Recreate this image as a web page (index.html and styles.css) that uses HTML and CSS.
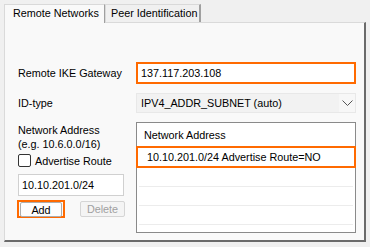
FILE: index.html
```html
<!DOCTYPE html>
<html lang="en">
<head>
    <meta charset="UTF-8">
    <title>Remote Networks</title>
    <link rel="stylesheet" href="styles.css">
</head>
<body>
    <div class="tabs">
        <div class="tab active">Remote Networks</div>
        <div class="tab">Peer Identification</div>
    </div>

    <div class="panel">
        <div class="row gateway-row">
            <label class="label">Remote IKE Gateway</label>
            <div class="mark gateway-mark">
                <div class="textbox gateway">137.117.203.108</div>
            </div>
        </div>

        <div class="row id-row">
            <label class="label">ID-type</label>
            <div class="combo">
                <span>IPV4_ADDR_SUBNET (auto)</span>
                <span class="chevron">
                    <svg width="11" height="7" viewBox="0 0 11 7"><path d="M0.5 0.5 L5.5 5.5 L10.5 0.5" fill="none" stroke="#555" stroke-width="1"/></svg>
                </span>
            </div>
        </div>

        <div class="row networks-row">
            <div class="left-col">
                <div class="net-label">Network Address<br>(e.g. 10.6.0.0/16)</div>
                <label class="check"><span class="box"></span>Advertise Route</label>
                <div class="textbox net-input">10.10.201.0/24</div>
                <div class="buttons">
                    <div class="mark add-mark"><div class="btn">Add</div></div>
                    <div class="btn disabled">Delete</div>
                </div>
            </div>

            <div class="listbox">
                <div class="list-head">Network Address</div>
                <div class="mark list-mark">
                    <div class="list-item">10.10.201.0/24 Advertise Route=NO</div>
                </div>
                <div class="list-item empty"></div>
                <div class="list-item empty"></div>
                <div class="list-item empty"></div>
            </div>
        </div>
    </div>
</body>
</html>
```

FILE: styles.css
```css
* {
    box-sizing: border-box;
    margin: 0;
    padding: 0;
}

body {
    background-color: #f0f0f0;
    font-family: "Liberation Sans", Arial, sans-serif;
    font-size: 10.8px;
    color: #000;
    width: 370px;
    height: 247px;
    overflow: hidden;
}

.tabs {
    display: flex;
    padding: 4px 0 0 4px;
    height: 22px;
    align-items: flex-end;
}

.tab {
    height: 18px;
    padding: 0 6px 0 7px;
    line-height: 17px;
    white-space: nowrap;
    border: 1px solid #d9d9d9;
    border-bottom: none;
    border-right: 2px solid #a0a0a0;
    background-color: #f0f0f0;
}

.tab.active {
    width: 101px;
    height: 19px;
    padding-left: 8px;
    background-color: #f9f9f9;
    border-right: 1px solid #a0a0a0;
    position: relative;
    top: 1px;
}

.tab + .tab {
    width: 96px;
    padding-left: 5px;
}

.panel {
    margin-left: 4px;
    width: 362px;
    height: 220px;
    background-color: #f9f9f9;
    border: 1px solid #dadada;
    border-right: 2px solid #6b6b6b;
    border-bottom: 2px solid #6b6b6b;
    padding: 39px 0 0 13px;
}

.row {
    display: flex;
}

.label {
    width: 118px;
    display: flex;
    align-items: center;
}

.mark {
    border: 2px solid #ff6a00;
}

.gateway-mark {
    width: 220px;
    height: 22px;
}

.textbox {
    background-color: #fff;
}

.gateway {
    height: 18px;
    line-height: 18px;
    padding-left: 3px;
}

.id-row {
    margin-top: 9px;
    height: 20px;
}

.combo {
    width: 220px;
    display: flex;
    justify-content: space-between;
    align-items: center;
    background-color: #f2f2f2;
    border: 1px solid #e8e8e8;
    padding-left: 4px;
}

.chevron {
    width: 16px;
    height: 18px;
    display: flex;
    align-items: center;
    justify-content: center;
    background-color: #f7f7f7;
}

.networks-row {
    margin-top: 9px;
    height: 111px;
}

.left-col {
    width: 118px;
    padding-top: 1px;
}

.net-label {
    line-height: 14px;
}

.check {
    display: flex;
    align-items: center;
    height: 15px;
    margin-top: 2px;
}

.box {
    width: 13px;
    height: 13px;
    border: 1px solid #333;
    border-radius: 2px;
    background-color: #fff;
    margin-right: 4px;
}

.net-input {
    width: 106px;
    height: 22px;
    margin-top: 6px;
    border: 1px solid #d0d0d0;
    line-height: 20px;
    padding-left: 3px;
}

.buttons {
    display: flex;
    margin-top: 4px;
    margin-left: -1px;
    align-items: flex-start;
}

.add-mark {
    width: 48px;
    height: 18px;
    padding: 0 1px;
}

.btn {
    height: 15px;
    line-height: 14px;
    text-align: center;
    border: 1px solid #adadad;
    border-radius: 2px;
    background-color: #fdfdfd;
}

.btn.disabled {
    width: 45px;
    height: 16px;
    margin-left: 15px;
    margin-top: 1px;
    color: #a0a0a0;
    border-color: #d5d5d5;
    background-color: #f4f4f4;
}

.listbox {
    width: 220px;
    height: 111px;
    background-color: #fff;
    border: 1px solid #8a8a8a;
    padding-top: 3px;
}

.list-head {
    height: 20px;
    line-height: 18px;
    padding-left: 7px;
}

.list-mark {
    margin-left: -1px;
    margin-right: -1px;
    height: 22px;
}

.list-item {
    height: 18px;
    line-height: 18px;
    padding-left: 9px;
}

.list-item.empty {
    height: 19px;
    border-bottom: 1px solid #ececec;
    margin: 0 2px;
}
```
